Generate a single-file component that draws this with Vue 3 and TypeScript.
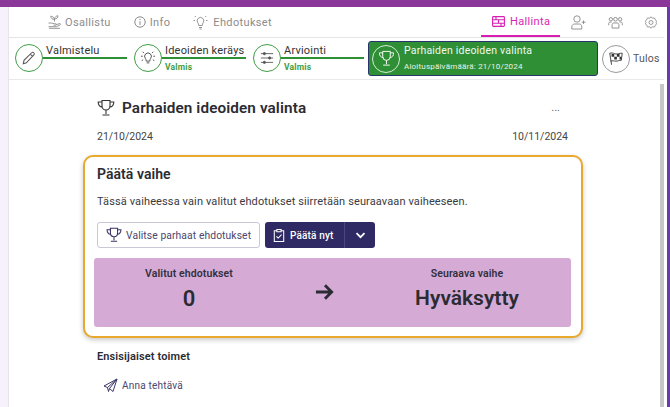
<script setup lang="ts">
interface Step { label: string; sub?: string; lineWidth: number }
const steps: Step[] = [
  { label: 'Valmistelu', lineWidth: 84 },
  { label: 'Ideoiden keräys', sub: 'Valmis', lineWidth: 84 },
  { label: 'Arviointi', sub: 'Valmis', lineWidth: 83 },
]
</script>

<template>
  <div class="page">
    <div class="topbar"></div>
    <div class="frame">
      <div class="side"></div>
      <div class="main">
        <nav class="nav">
          <div class="tabs">
            <span class="tab t1">
              <svg width="13" height="14" viewBox="0 0 13 14" fill="none" stroke="#8a8a8a" stroke-width=".9">
                <path d="M6.500 6.500V4M6.500 4.500C6.300 2.500 4.500 1.200 2.800 1.200 2.800 3.200 4.500 4.800 6.500 4.500M6.500 3.800C6.800 2 8.300 .8 10 .8c0 2-1.500 3.300-3.500 3"/>
                <path d="M.5 8h2.800c1.300 0 2 .8 3.400.8H8c.8 0 .8 1.400 0 1.400H5.500M8.500 9.600l3-1c1-.3 1.400.8.6 1.300l-3.600 1.800H.5M1 13.300h11"/>
              </svg>
              Osallistu
            </span>
            <span class="tab t2">
              <svg width="14" height="14" viewBox="0 0 14 14" fill="none" stroke="#8a8a8a">
                <circle cx="7" cy="7" r="5.200"/>
                <path d="M7 6.200v3.800M7 3.800v1.200"/>
              </svg>
              Info
            </span>
            <span class="tab t3">
              <svg width="15" height="15" viewBox="0 0 15 15" fill="none" stroke="#8a8a8a" stroke-width=".9">
                <path d="M4.700 7.500a3.300 3.300 0 1 1 5.600 0c-.7 1-1 1.700-1 3H5.700c0-1.300-.3-2-1-3zM6 12.500h3M6.500 14h2M.5 5.500H2M13 5.500h1.500M1.800 1l1 1M13.200 1l-1 1"/>
              </svg>
              Ehdotukset
            </span>
          </div>
          <div class="tabs right">
            <span class="tab active">
              <svg width="13" height="11" viewBox="0 0 13 11" fill="none" stroke="#d81fb4" stroke-width="1.100">
                <rect x=".6" y=".6" width="11.800" height="9.800" rx=".8"/>
                <path d="M.6 3.700h11.800M.6 7.300h11.800M6.500 3.700v3.600M4 .6v3.100M9 7.300v3.100"/>
              </svg>
              Hallinta
            </span>
            <svg class="ic i1" width="15" height="15" viewBox="0 0 15 15" fill="none" stroke="#8a8a8a" stroke-width=".9">
              <circle cx="6" cy="4" r="3.200"/>
              <path d="M.8 14v-2c0-2 1.500-3 3-3h4.500c1.500 0 2.500 1 2.500 3v2zM12.500 5.500v3.500M10.800 7.200h3.700"/>
            </svg>
            <svg class="ic i2" width="15" height="13" viewBox="0 0 16 14" fill="none" stroke="#8a8a8a">
              <circle cx="3" cy="3.500" r="1.800"/>
              <circle cx="8" cy="3.500" r="2"/>
              <circle cx="13" cy="3.500" r="1.800"/>
              <path d="M.7 10V8c0-1 .8-1.500 1.500-1.500h1.600M15.300 10V8c0-1-.8-1.500-1.500-1.500h-1.600M4.300 13V9.500c0-1 .8-2 2-2h3.400c1.200 0 2 1 2 2V13z"/>
            </svg>
            <svg class="ic i3" width="12" height="13" viewBox="0 0 14 15" fill="none" stroke="#8a8a8a">
              <path d="M7 .8l1.500 1.700 2.500-.3 1.200 2.200 1.300 1.600-.6 1.500.6 1.500-1.300 1.600-1.200 2.200-2.500-.3L7 14.200l-1.500-1.700-2.500.3-1.200-2.200L.5 9l.6-1.500L.5 6l1.300-1.600L3 2.200l2.500.3z"/>
              <circle cx="7" cy="7.500" r="2.300"/>
            </svg>
          </div>
        </nav>

        <div class="stepper">
          <div v-for="(s, i) in steps" :key="s.label" class="step">
            <span class="circle">
              <svg v-if="i === 0" width="14" height="14" viewBox="0 0 16 16" fill="none" stroke="#555" stroke-width="1.200">
                <path d="M1.500 14.500l.8-3.800L11 2c.8-.8 1.800-.8 2.500 0 .7.700.7 1.700 0 2.500L5 13.500zM9.500 3.500l3 3"/>
              </svg>
              <svg v-else-if="i === 1" width="16" height="16" viewBox="0 0 18 18" fill="none" stroke="#444">
                <path d="M6 9.500a3.800 3.800 0 1 1 6 0c-.7 1-1 1.800-1 3H7c0-1.200-.3-2-1-3zM7.500 14.500h3M1 7h2M15 7h2M3 2l1.500 1.500M15 2l-1.500 1.500M2 12l1.500-1M16 12l-1.500-1"/>
              </svg>
              <svg v-else width="14" height="14" viewBox="0 0 16 16" fill="#555" stroke="#555">
                <path d="M1 3h14M1 8h14M1 13h14" fill="none"/>
                <circle cx="5" cy="3" r="1.300"/>
                <circle cx="11" cy="8" r="1.300"/>
                <circle cx="5" cy="13" r="1.300"/>
              </svg>
            </span>
            <div class="step-body" :style="{ width: s.lineWidth + 'px' }">
              <div class="step-label">{{ s.label }}</div>
              <div class="step-line"></div>
              <div v-if="s.sub" class="step-sub">{{ s.sub }}</div>
            </div>
          </div>
          <div class="current">
            <span class="circle light">
              <svg width="17" height="17" viewBox="0 0 18 18" fill="none" stroke="#fff">
                <path d="M5 1.500h8v5.500a4 4 0 0 1-8 0zM5 3H1.500c0 3 1 4.500 4 5M13 3h3.500c0 3-1 4.500-4 5M9 11v4M5.500 16h7"/>
              </svg>
            </span>
            <div>
              <div class="current-title">Parhaiden ideoiden valinta</div>
              <div class="current-sub">Aloituspäivämäärä: 21/10/2024</div>
            </div>
          </div>
          <div class="result">
            <span class="circle grey">
              <svg width="16" height="15" viewBox="0 0 18 16" fill="none" stroke="#333">
                <path d="M4 15L2 2c4-1 5 1 7 1s4-1 7-1l-1 8c-3 0-4 1-6 1s-4-1-6 0"/>
                <path d="M4 3h3v3H4zM10 3h3v3h-3zM7 6h3v3H7zM13 6h2v3h-2z" fill="#333" stroke="none"/>
              </svg>
            </span>
            <span class="result-label">Tulos</span>
          </div>
        </div>

        <div class="scroll-row">
          <div class="content">
            <header class="title-row">
              <svg width="18" height="18" viewBox="0 0 18 18" fill="none" stroke="#333" stroke-width="1.100">
                <path d="M5 1.500h8v5.500a4 4 0 0 1-8 0zM5 3H1.200c0 3 1 4.800 4.300 5.200M13 3h3.800c0 3-1 4.800-4.300 5.200M9 11v4M5.500 16h7"/>
              </svg>
              <h1>Parhaiden ideoiden valinta</h1>
              <span class="more">...</span>
            </header>
            <div class="dates">
              <span>21/10/2024</span>
              <span>10/11/2024</span>
            </div>

            <section class="card">
              <h2>Päätä vaihe</h2>
              <p>Tässä vaiheessa vain valitut ehdotukset siirretään seuraavaan vaiheeseen.</p>
              <div class="actions">
                <button class="btn-outline" type="button">
                  <svg width="16" height="16" viewBox="0 0 18 18" fill="none" stroke="#3a3566" stroke-width="1.200">
                    <path d="M5 1.500h8v5.500a4 4 0 0 1-8 0zM5 3H1.200c0 3 1 4.800 4.300 5.200M13 3h3.800c0 3-1 4.800-4.300 5.200M9 11v4M5.500 16h7"/>
                  </svg>
                  Valitse parhaat ehdotukset
                </button>
                <div class="btn-split">
                  <button class="btn-main" type="button">
                    <svg width="12" height="15" viewBox="0 0 14 17" fill="none" stroke="#fff" stroke-width="1.200">
                      <path d="M4 3H1.500v12.500h11V3H10M4.500 1.500h5V4h-5zM4 9.500l2 2 4-4"/>
                    </svg>
                    Päätä nyt
                  </button>
                  <button class="btn-caret" type="button" aria-label="Lisää">
                    <svg width="11" height="7" viewBox="0 0 11 7" fill="none" stroke="#fff" stroke-width="1.800">
                      <path d="M1.500 1.200l4 4 4-4"/>
                    </svg>
                  </button>
                </div>
              </div>
              <div class="summary">
                <div class="sum-col">
                  <div class="sum-label">Valitut ehdotukset</div>
                  <div class="sum-zero">0</div>
                </div>
                <svg class="arrow" width="19" height="18" viewBox="0 0 20 18" fill="none" stroke="#2b2b33" stroke-width="3">
                  <path d="M1 9h16M10.500 2L17.500 9l-7 7"/>
                </svg>
                <div class="sum-col">
                  <div class="sum-label">Seuraava vaihe</div>
                  <div class="sum-value">Hyväksytty</div>
                </div>
              </div>
            </section>

            <h3>Ensisijaiset toimet</h3>
            <div class="task">
              <svg width="15" height="15" viewBox="0 0 15 15" fill="none" stroke="#3a3566">
                <path d="M14 1L1 8l3.500 1.500L14 1l-7.500 9.500 3.500 3zM4.500 9.500l1 4 1-3"/>
              </svg>
              Anna tehtävä
            </div>
          </div>
          <div class="scrollbar"></div>
        </div>
      </div>
      <div class="gutter"></div>
      <div class="edge"></div>
    </div>
  </div>
</template>

<style>
html, body { margin: 0; background: #fff; overflow: hidden; }
</style>

<style scoped>
.page {
  width: 670px; height: 407px; display: flex; flex-direction: column;
  font-family: Roboto, "Liberation Sans", sans-serif; color: #2b2b33; overflow: hidden;
}
.topbar { height: 7px; background: #8a3799; flex: none; }
.frame { flex: 1; display: flex; min-height: 0; }
.side { width: 8px; background: #f6f1fa; border-right: 1px solid #e8e4ea; flex: none; }
.main { flex: 1; min-width: 0; display: flex; flex-direction: column; }
.gutter { width: 3px; background: #fff; flex: none; }
.edge { width: 3px; background: #6b3aa8; flex: none; }

.nav {
  height: 30px; flex: none; display: flex; justify-content: space-between;
  border-bottom: 1px solid #e4e4e4; box-sizing: content-box;
}
.tabs { display: flex; align-items: center; }
.tab {
  display: inline-flex; align-items: center; gap: 4px; font-size: 11px;
  letter-spacing: .35px; color: #8c8c8c;
}
.t1 { margin-left: 39px; }
.t2 { margin-left: 22px; gap: 3px; }
.t3 { margin-left: 23px; gap: 5px; }
.right { align-items: stretch; }
.active {
  color: #d81fb4; width: 79px; box-sizing: border-box; padding-left: 11px;
  border-bottom: 2px solid #d81fb4; height: 30px; gap: 5px; margin-bottom: -1px;
}
.ic { align-self: center; flex: none; }
.i1 { margin-left: 11px; }
.i2 { margin-left: 22px; }
.i3 { margin-left: 22px; margin-right: 7px; }

.stepper {
  height: 41px; flex: none; display: flex; align-items: center; padding-left: 6px;
  border-bottom: 1px solid #e9e9e9;
}
.step { display: flex; align-items: flex-start; height: 30px; margin-right: 7px; }
.step:nth-child(3) { margin-right: 4px; }
.circle {
  width: 28px; height: 28px; box-sizing: border-box; flex: none; border-radius: 50%;
  border: 1.500px solid #3f9d46; display: flex; align-items: center; justify-content: center; background: #fff;
}
.step-body { position: relative; height: 28px; padding-left: 3px; box-sizing: border-box; }
.step-label { font-size: 11px; line-height: 14px; color: #333; letter-spacing: .2px; white-space: nowrap; }
.step-line { position: absolute; left: 0; right: 0; top: 13px; height: 2px; background: #2f8f35; }
.step-sub { font-size: 8.500px; line-height: 10px; font-weight: 700; color: #3f9d46; margin-top: 4px; letter-spacing: .2px; }

.current {
  width: 230px; height: 35px; box-sizing: border-box; background: #2f8f35; border: 1px solid #27356b;
  border-radius: 3px; display: flex; align-items: center; gap: 4px; padding-left: 3px; color: #fff; flex: none;
}
.circle.light { background: transparent; border: 1px solid #d6ecd8; }
.current-title { font-size: 10.500px; line-height: 14px; letter-spacing: .2px; color: #f0f8f0; }
.current-sub { font-size: 8px; line-height: 13px; letter-spacing: .2px; color: #e8f4e8; margin-top: 2px; }
.result { display: flex; align-items: center; gap: 3px; margin-left: 4px; }
.circle.grey { border: 1px solid #9a9a9a; }
.result-label { font-size: 10.500px; color: #555; letter-spacing: .2px; }

.scroll-row { flex: 1; min-height: 0; display: flex; }
.content { width: 500px; margin-left: 74px; flex: none; }
.scrollbar { width: 4px; background: #c6c6c6; margin: 4px 0 0 auto; flex: none; }

.title-row { display: flex; align-items: center; height: 24px; margin-top: 16px; padding-left: 14px; }
.title-row h1 { margin: 0 0 0 7px; font-size: 15.300px; font-weight: 600; color: #2b2b33; letter-spacing: .1px; }
.more { margin-left: auto; margin-right: 23px; font-size: 11px; color: #666; position: relative; top: -1px; }
.dates {
  display: flex; justify-content: space-between; font-size: 10.500px; color: #444;
  margin-top: 10px; line-height: 14px; padding: 0 15px 0 14px;
}
.card {
  margin-top: 11px; height: 183px; box-sizing: border-box; border: 2px solid #e8a92c; border-radius: 10px;
  box-shadow: 0 2px 5px rgba(0,0,0,.22); padding: 8px 10px 0 9px; background: #fff;
}
.card h2 { margin: 0 0 0 3px; font-size: 14px; line-height: 18px; font-weight: 600; letter-spacing: .05px; color: #2b2b33; }
.card p { margin: 11px 0 0 3px; font-size: 11px; line-height: 16px; color: #3a3a42; letter-spacing: .12px; }
.actions { display: flex; gap: 5px; margin: 12px 0 0 3px; }
.btn-outline {
  width: 163px; height: 26px; box-sizing: border-box; background: #fff; border: 1px solid #c9c8d6; border-radius: 3px;
  display: flex; align-items: center; gap: 4px; padding: 0 0 0 8px; font: inherit; font-size: 10.300px; letter-spacing: .1px;
  color: #4a4670; white-space: nowrap;
}
.btn-split { display: flex; width: 110px; height: 26px; background: #2f2a63; border-radius: 3px; }
.btn-main {
  flex: 1; background: none; border: 0; border-right: 1px solid #4a4580; color: #fff; font: inherit; font-size: 10px;
  font-weight: 500; display: flex; align-items: center; gap: 5px; padding: 0 0 0 8px; letter-spacing: .15px; white-space: nowrap;
}
.btn-caret { width: 30px; background: none; border: 0; padding: 0; display: flex; align-items: center; justify-content: center; }
.summary {
  margin-top: 10px; height: 69px; background: #d5abd6; border-radius: 3px; display: flex; align-items: center;
}
.sum-col { width: 190px; text-align: center; flex: none; align-self: flex-start; padding-top: 9px; }
.sum-col:last-child { width: 172px; margin-left: auto; margin-right: 18px; }
.arrow { margin-left: 31px; margin-bottom: 2px; }
.sum-label { font-size: 10.500px; font-weight: 600; line-height: 13px; color: #33303c; letter-spacing: .1px; }
.sum-zero { font-size: 22px; font-weight: 600; line-height: 25px; margin-top: 6px; color: #2b2b33; }
.sum-value { font-size: 21px; font-weight: 600; line-height: 25px; margin-top: 6px; color: #2b2b33; }
h3 { margin: 12px 0 0 14px; font-size: 11px; line-height: 14px; font-weight: 600; color: #2b2b33; letter-spacing: .12px; }
.task { display: flex; align-items: center; gap: 4px; margin: 14px 0 0 20px; font-size: 10px; color: #4a4670; letter-spacing: .2px; }
</style>
